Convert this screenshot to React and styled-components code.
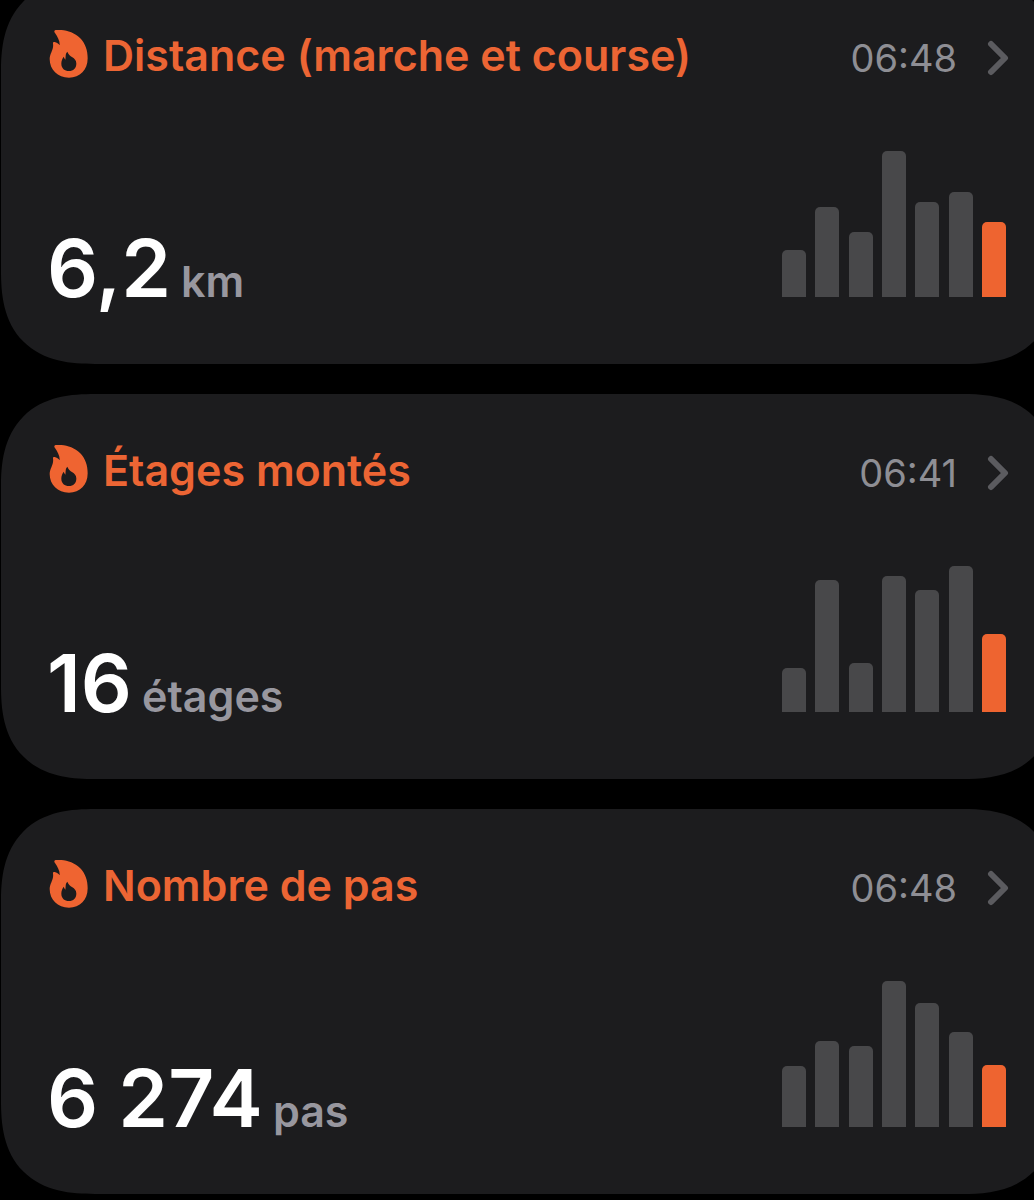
import React from "react";
import styled, { createGlobalStyle } from "styled-components";

const GlobalStyle = createGlobalStyle`
  *, *::before, *::after { box-sizing: border-box; }
  body {
    margin: 0;
    background: #000;
    font-family: Inter, "Liberation Sans", sans-serif;
    overflow: hidden;
  }
`;

/* The feed is scrolled a little, and runs past the right edge of the window. */
const Feed = styled.main`
  display: flex;
  flex-direction: column;
  gap: 30px;
  margin: -21px -22px 0 1px;
`;

const Card = styled.a`
  display: flex;
  flex-direction: column;
  gap: 73px;
  padding: 51px 50px 55px 48px;
  border-radius: 76px;
  background: #1c1c1e;
  color: inherit;
  text-decoration: none;

  /* Continuous corners where the browser can draw them. */
  @supports (corner-shape: superellipse(1.35)) {
    border-radius: 94px;
    corner-shape: superellipse(1.35);
  }
`;

const Header = styled.header`
  display: flex;
  align-items: center;
  height: 48px;
`;

const Title = styled.h2`
  flex: 1;
  margin: 2px 0 0 14px;
  font-size: 43px;
  font-weight: 600;
  line-height: 48px;
  color: #ec6534;
  white-space: nowrap;
`;

const Time = styled.time`
  margin-top: 8px;
  margin-right: 30px;
  font-size: 38px;
  line-height: 48px;
  color: #8e8e94;
`;

const FlameSvg = styled.svg`
  flex: none;
  width: 40px;
  height: 48px;
  fill: #ef6431;
`;

const ChevronSvg = styled.svg`
  flex: none;
  width: 22px;
  height: 36px;
  margin-top: 8px;
  margin-right: -3px;
  fill: none;
  stroke: #5b5b5f;
  stroke-width: 6;
  stroke-linecap: round;
  stroke-linejoin: round;
`;

const Body = styled.div`
  display: flex;
  align-items: baseline;
  justify-content: space-between;
`;

const Reading = styled.p`
  display: flex;
  align-items: baseline;
  gap: 10px;
  margin: 0 0 0 -2px;
`;

const Value = styled.span`
  font-size: 80px;
  font-weight: 600;
  line-height: 82px;
  color: #fff;
`;

const Unit = styled.span`
  font-size: 43px;
  font-weight: 600;
  line-height: 48px;
  color: #98979f;
`;

const Chart = styled.div`
  display: flex;
  align-items: flex-end;
  justify-content: space-between;
  width: 224px;
  height: 146px;
`;

const Bar = styled.span`
  width: 24px;
  height: ${(p) => p.$size}px;
  border-radius: 5px 5px 0 0;
  background: ${(p) => (p.$today ? "#ee6430" : "#48484a")};
`;

const Flame = () => (
  <FlameSvg viewBox="28 28 120 144" aria-hidden="true">
    <path
      fillRule="evenodd"
      d="M50 28C72 26 102 33 121 52C137 68 144 89 144 113C144 148 121 171 88 171C54 171 30 147 30 115C30 98 43 86 40 69C39 64 43 63 47 65C53 67 57 70 60 74C61 62 54 48 46 37C42 32 44 28 50 28ZM83 93C76 100 79 109 77 117C75 115 74 112 72 108C68 114 65 121 65 129C65 143 75 151 88 151C101 151 110 142 110 129C110 119 104 114 98 110C91 106 86 101 83 93Z"
    />
  </FlameSvg>
);

const Chevron = () => (
  <ChevronSvg viewBox="0 0 22 36" aria-hidden="true">
    <path d="M4 4L18 18L4 32" />
  </ChevronSvg>
);

const metrics = [
  {
    title: "Distance (marche et course)",
    time: "06:48",
    value: "6,2",
    unit: "km",
    bars: [47, 90, 65, 146, 95, 105, 75],
  },
  {
    title: "Étages montés",
    time: "06:41",
    value: "16",
    unit: "étages",
    bars: [44, 132, 49, 136, 122, 146, 78],
  },
  {
    title: "Nombre de pas",
    time: "06:48",
    value: "6 274",
    unit: "pas",
    bars: [61, 86, 81, 146, 124, 95, 62],
  },
];

const MetricCard = ({ title, time, value, unit, bars }) => (
  <Card href="#">
    <Header>
      <Flame />
      <Title>{title}</Title>
      <Time dateTime={time}>{time}</Time>
      <Chevron />
    </Header>
    <Body>
      <Reading>
        <Value>{value}</Value>
        <Unit>{unit}</Unit>
      </Reading>
      <Chart aria-hidden="true">
        {bars.map((size, i) => (
          <Bar key={i} $size={size} $today={i === bars.length - 1} />
        ))}
      </Chart>
    </Body>
  </Card>
);

export default function App() {
  return (
    <>
      <GlobalStyle />
      <Feed>
        {metrics.map((m) => (
          <MetricCard key={m.title} {...m} />
        ))}
      </Feed>
    </>
  );
}
